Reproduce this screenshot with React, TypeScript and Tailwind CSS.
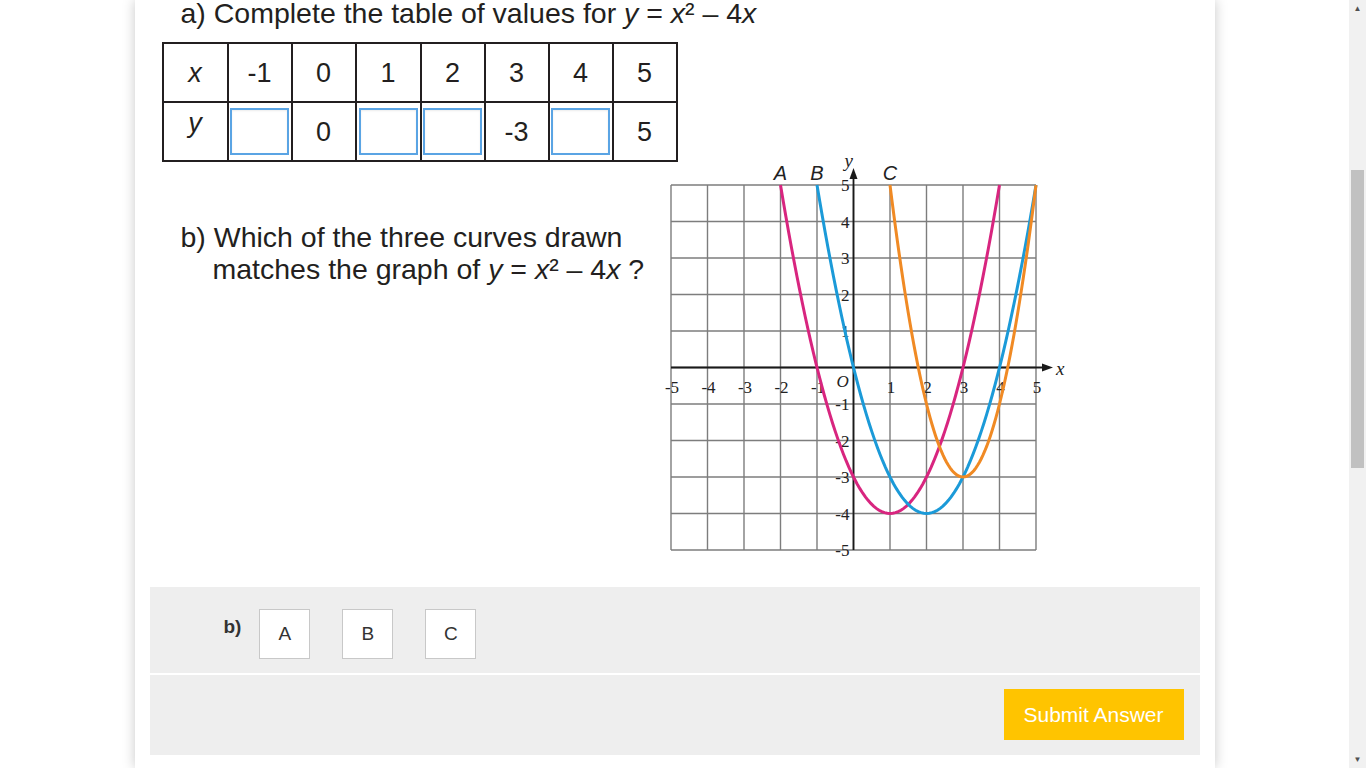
import React from 'react';

const ink = '#231f20';

// graph geometry (svg coords)
const OX = 193.5;
const OY = 222.5;
const U = 36.5;
const gx = (x: number) => OX + U * x;
const gy = (y: number) => OY - U * y;

const curvePath = (f: (x: number) => number, from: number, to: number) => {
  const pts: string[] = [];
  const steps = 80;
  for (let i = 0; i <= steps; i++) {
    const x = from + ((to - from) * i) / steps;
    pts.push(`${i === 0 ? 'M' : 'L'}${gx(x).toFixed(2)} ${gy(f(x)).toFixed(2)}`);
  }
  return pts.join(' ');
};

const Graph: React.FC = () => {
  const units = [-5, -4, -3, -2, -1, 0, 1, 2, 3, 4, 5];
  return (
    <svg width="410" height="415" viewBox="0 0 410 415" className="block">
      {/* grid */}
      {units.map((u) => (
        <g key={u}>
          <line x1={gx(u)} y1={gy(5)} x2={gx(u)} y2={gy(-5)} stroke="#7d7d7d" strokeWidth="1.4" />
          <line x1={gx(-5)} y1={gy(u)} x2={gx(5)} y2={gy(u)} stroke="#7d7d7d" strokeWidth="1.4" />
        </g>
      ))}
      {/* axes */}
      <line x1={gx(0)} y1={gy(-5)} x2={gx(0)} y2={gy(5) - 8} stroke="#1a1a1a" strokeWidth="1.8" />
      <line x1={gx(-5)} y1={gy(0)} x2={gx(5) + 8} y2={gy(0)} stroke="#1a1a1a" strokeWidth="1.8" />
      <path d={`M${gx(0)} ${gy(5) - 17} L${gx(0) - 4} ${gy(5) - 6} L${gx(0) + 4} ${gy(5) - 6} Z`} fill="#1a1a1a" />
      <path d={`M${gx(5) + 17} ${gy(0)} L${gx(5) + 6} ${gy(0) - 4} L${gx(5) + 6} ${gy(0) + 4} Z`} fill="#1a1a1a" />

      {/* tick labels */}
      <g fontFamily='"Liberation Serif", serif' fontSize="17" fill="#222">
        {units
          .filter((u) => u !== 0)
          .map((u) => (
            <text key={`x${u}`} x={gx(u) + 1} y={gy(0) + 25} textAnchor="middle">
              {u}
            </text>
          ))}
        {units
          .filter((u) => u !== 0)
          .map((u) => (
            <text key={`y${u}`} x={gx(0) - 4} y={gy(u) + 6} textAnchor="end">
              {u}
            </text>
          ))}
        <text x={gx(0) - 17} y={gy(0) + 19} fontStyle="italic">
          O
        </text>
        <text x={gx(0) - 9} y={gy(5) - 18} fontStyle="italic" fontSize="19">
          y
        </text>
        <text x={gx(5) + 20} y={gy(0) + 7} fontStyle="italic" fontSize="19">
          x
        </text>
      </g>

      {/* curves */}
      <path d={curvePath((x) => x * x - 2 * x - 3, -2, 4)} fill="none" stroke="#d8257f" strokeWidth="3" />
      <path d={curvePath((x) => x * x - 4 * x, -1, 5)} fill="none" stroke="#1b9ad8" strokeWidth="3" />
      <path d={curvePath((x) => 2 * (x - 3) * (x - 3) - 3, 1, 5)} fill="none" stroke="#f08a24" strokeWidth="3" />

      {/* curve labels */}
      <g fontFamily='"Liberation Sans", Arial, sans-serif' fontSize="20" fontStyle="italic" fill="#222" textAnchor="middle">
        <text x={gx(-2)} y={gy(5) - 5}>A</text>
        <text x={gx(-1)} y={gy(5) - 5}>B</text>
        <text x={gx(1)} y={gy(5) - 5}>C</text>
      </g>
    </svg>
  );
};

const InputBox: React.FC = () => (
  <div className="w-[59px] h-[47px] mx-auto border-2 border-[#5aa4e4] bg-white shadow-[inset_0_1px_2px_rgba(0,0,0,0.08)]" />
);

const ValuesTable: React.FC = () => {
  const xs = ['-1', '0', '1', '2', '3', '4', '5'];
  const ys: (string | null)[] = [null, '0', null, null, '-3', null, '5'];
  const widths = ['w-[65px]', 'w-[64px]', 'w-[64px]', 'w-[65px]', 'w-[64px]', 'w-[64px]', 'w-[64px]', 'w-[64px]'];
  return (
    <table className="border-collapse border-2 border-[#231f20] text-[27px] text-[#231f20]">
      <tbody>
        <tr className="h-[59px]">
          <td className={`${widths[0]} border-2 border-[#231f20] text-center italic`}>x</td>
          {xs.map((v, i) => (
            <td key={v} className={`${widths[i + 1]} border-2 border-[#231f20] text-center`}>
              {v}
            </td>
          ))}
        </tr>
        <tr className="h-[59px]">
          <td className="border-2 border-[#231f20] text-center italic align-top pt-[4px]">y</td>
          {ys.map((v, i) => (
            <td key={i} className="border-2 border-[#231f20] text-center p-0">
              {v === null ? <InputBox /> : v}
            </td>
          ))}
        </tr>
      </tbody>
    </table>
  );
};

const App: React.FC = () => {
  return (
    <div className="flex h-[768px] overflow-hidden bg-white font-['Liberation_Sans',Arial,sans-serif]">
      <div className="flex-1">
        <div className="w-[1080px] h-full mx-auto bg-white shadow-[0_0_12px_rgba(0,0,0,0.22)] flex flex-col">
          {/* question image area */}
          <div className="text-[28.5px] leading-[32px]" style={{ color: ink }}>
            <p className="pl-[46px] leading-[26px]">
              a) Complete the table of values for <i>y</i> = <i>x</i>² – 4<i>x</i>
            </p>
            <div className="pl-[27px] mt-[16px]">
              <ValuesTable />
            </div>
            <div className="flex -mt-[17px] h-[415px]">
              <div className="w-[525px] pl-[46px] pt-[76px]">
                <p>b) Which of the three curves drawn</p>
                <p className="pl-[32px]">
                  matches the graph of <i>y</i> = <i>x</i>² – 4<i>x</i> ?
                </p>
              </div>
              <Graph />
            </div>
          </div>

          {/* answer area */}
          <div className="mx-[15px] mt-[27px] h-[86px] bg-[#eeeeee] flex items-start pl-[74px] pt-[22px]">
            <span className="font-bold text-[19px] text-[#333] mt-[4px] mr-[18px]">b)</span>
            <div className="flex gap-[32px]">
              {['A', 'B', 'C'].map((l) => (
                <button
                  key={l}
                  className="w-[51px] h-[50px] bg-white border border-[#c8c8c8] text-[19px] text-[#333] flex items-center justify-center"
                >
                  {l}
                </button>
              ))}
            </div>
          </div>
          <div className="mx-[15px] mt-[2px] h-[80px] bg-[#eeeeee] flex justify-end items-start pt-[14px] pr-[16px]">
            <button className="w-[180px] h-[51px] bg-[#ffc400] text-white text-[21px]">Submit Answer</button>
          </div>
        </div>
      </div>

      {/* scrollbar */}
      <div className="w-[17px] h-full bg-[#f1f1f1] flex flex-col items-center">
        <div className="h-[17px] flex items-center justify-center text-[#505050] text-[8px] leading-none">▲</div>
        <div className="w-[13px] h-[298px] mt-[153px] bg-[#c1c1c1]" />
        <div className="flex-1" />
        <div className="h-[17px] flex items-center justify-center text-[#505050] text-[8px] leading-none">▼</div>
      </div>
    </div>
  );
};

export default App;
